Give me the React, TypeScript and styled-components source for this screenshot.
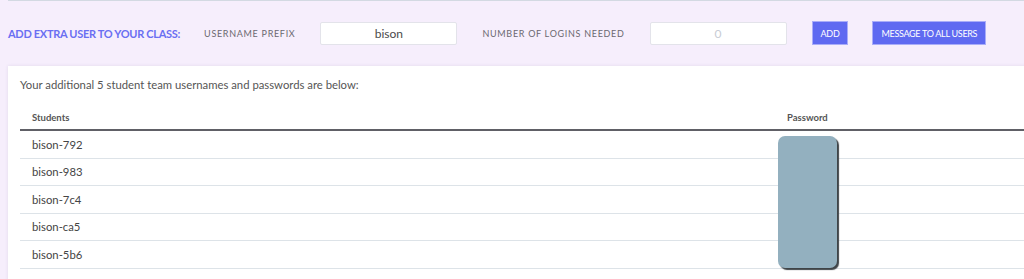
import styled, { createGlobalStyle } from 'styled-components';

const GlobalStyle = createGlobalStyle`
  body {
    margin: 0;
    background: #f6eefc;
    font-family: Lato, 'Open Sans', sans-serif;
    overflow: hidden;
  }
`;

const Page = styled.div`
  padding-left: 8px;
  width: 1060px;
`;

const TopRule = styled.div`
  height: 1px;
  background: #d3d9e2;
`;

const Toolbar = styled.div`
  display: flex;
  align-items: center;
  height: 64px;
  padding-bottom: 1px;
`;

const Title = styled.div`
  font-size: 11px;
  font-weight: 700;
  color: #6a6ff2;
  letter-spacing: -0.3px;
  margin-right: 24px;
`;

const FieldLabel = styled.div`
  font-size: 9px;
  letter-spacing: 0.7px;
  color: #6b6870;
  margin-right: 25px;
`;

const TextInput = styled.input`
  width: 137px;
  height: 23px;
  box-sizing: border-box;
  border: 1px solid #e3e3ea;
  border-radius: 2px;
  background: #fff;
  text-align: center;
  font-family: Lato, sans-serif;
  font-size: 12px;
  color: #4a4a4a;
  margin-right: 25px;
  outline: none;

  &::placeholder {
    color: #c8ccd4;
  }
`;

const Button = styled.button<{ $gap?: number }>`
  height: 24px;
  padding: 0 8px;
  border: 1px solid #a9adf8;
  background: #5f6af1;
  color: #fff;
  font-family: Lato, sans-serif;
  font-size: 9px;
  letter-spacing: -0.3px;
  margin-right: ${(p) => p.$gap ?? 0}px;
  cursor: pointer;
`;

const Card = styled.div`
  background: #fff;
  padding: 12px 12px 20px;
  box-shadow: 0 0 3px rgba(180, 170, 200, 0.3);
`;

const Intro = styled.p`
  margin: 0 0 10px;
  font-size: 11.3px;
  color: #555;
`;

const Table = styled.table`
  width: 1040px;
  border-collapse: collapse;
  table-layout: fixed;
`;

const HeadCell = styled.th`
  text-align: left;
  font-size: 9.5px;
  font-weight: 700;
  color: #555;
  padding: 11px 12px 6px;
  height: 11px;
  border-bottom: 2px solid #606066;
`;

const Cell = styled.td`
  font-size: 11.3px;
  color: #444;
  padding: 0 12px;
  height: 26.5px;
  border-bottom: 1px solid #dde3e8;
`;

const PasswordCell = styled(Cell)`
  position: relative;
`;

const Redaction = styled.div`
  position: absolute;
  top: 5px;
  left: 3px;
  width: 59px;
  height: 132px;
  border-radius: 7px;
  background: #93b0bf;
  box-shadow: 2px 2px 1px #3f4448;
  z-index: 1;
`;

const students = ['bison-792', 'bison-983', 'bison-7c4', 'bison-ca5', 'bison-5b6'];

export default function App() {
  return (
    <Page>
      <GlobalStyle />
      <TopRule />
      <Toolbar>
        <Title>ADD EXTRA USER TO YOUR CLASS:</Title>
        <FieldLabel>USERNAME PREFIX</FieldLabel>
        <TextInput defaultValue="bison" />
        <FieldLabel>NUMBER OF LOGINS NEEDED</FieldLabel>
        <TextInput placeholder="0" />
        <Button $gap={24}>ADD</Button>
        <Button>MESSAGE TO ALL USERS</Button>
      </Toolbar>
      <Card>
        <Intro>Your additional 5 student team usernames and passwords are below:</Intro>
        <Table>
          <colgroup>
            <col style={{ width: 755 }} />
            <col />
          </colgroup>
          <thead>
            <tr>
              <HeadCell>Students</HeadCell>
              <HeadCell>Password</HeadCell>
            </tr>
          </thead>
          <tbody>
            {students.map((name, i) => (
              <tr key={name}>
                <Cell>{name}</Cell>
                <PasswordCell>{i === 0 && <Redaction />}</PasswordCell>
              </tr>
            ))}
          </tbody>
        </Table>
      </Card>
    </Page>
  );
}
